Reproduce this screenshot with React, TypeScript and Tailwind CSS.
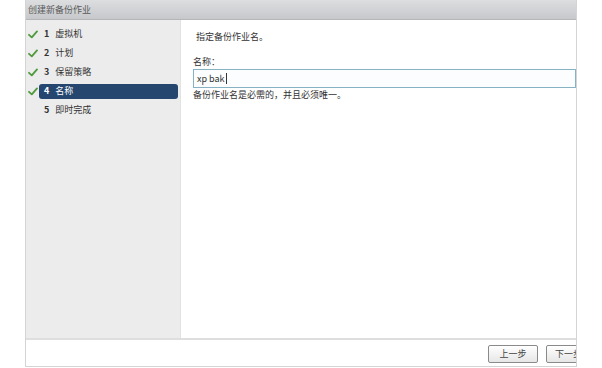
import { memo } from 'react';

// Wizard steps shown in the left column
const STEPS = [
  { no: 1, label: '虚拟机', done: true },
  { no: 2, label: '计划', done: true },
  { no: 3, label: '保留策略', done: true },
  { no: 4, label: '名称', done: true, active: true },
  { no: 5, label: '即时完成', done: false },
] as const;

const FONT = { fontFamily: '"Noto Sans CJK SC", "Liberation Sans", sans-serif' };

const Check = () => (
  <svg width="10" height="9" viewBox="0 0 10 9" className="shrink-0">
    <path d="M1 4.8 L3.8 7.4 L9 1.4" fill="none" stroke="#4f9a3c" strokeWidth="1.8" strokeLinecap="round" strokeLinejoin="round" />
  </svg>
);

const App = () => {
  return (
    <div className="w-[602px] h-[368px] bg-white flex overflow-hidden text-[#333]" style={FONT}>
      <div className="w-[25px] shrink-0" />

      {/* Dialog */}
      <div className="w-[552px] h-[367px] flex flex-col border-x border-b border-[#d4d4d4]">
        {/* Title bar */}
        <div className="h-[20px] shrink-0 flex items-center px-[2px] bg-gradient-to-b from-[#dcdee0] to-[#c6c8cb] border-b border-[#b4b6b8] text-[9px] text-[#5a5a5a]">
          创建新备份作业
        </div>

        {/* Body */}
        <div className="flex-1 flex min-h-0">
          {/* Steps */}
          <div className="w-[155px] shrink-0 bg-[#ececec] flex flex-col pt-[6px] gap-[3px] border-r border-[#e2e2e2]">
            {STEPS.map((s) => (
              <div key={s.no} className="flex items-center h-[16px]">
                <div className="w-[12px] flex justify-end">{s.done && <Check />}</div>
                <div
                  className={`ml-[1px] w-[139px] h-[15px] flex items-center pl-[5px] text-[9px] rounded-[3px] ${
                    s.active ? 'bg-[#24466f] text-white' : 'text-[#333]'
                  }`}
                >
                  <span className="mr-[6px] font-semibold">{s.no}</span>
                  {s.label}
                </div>
              </div>
            ))}
          </div>

          {/* Content */}
          <div className="flex-1 bg-white pl-[12px] pt-[11px] text-[9px] leading-[12px] text-[#333]">
            <div className="pl-[3px]">指定备份作业名。</div>
            <div className="mt-[13px]">名称：</div>
            <div className="mt-[1px] h-[19px] border border-[#86b2c4] bg-[#fbfdfe] flex items-center px-[3px]">
              xp bak<span className="w-px h-[11px] bg-[#333] ml-px" />
            </div>
            <div className="mt-[1px]">备份作业名是必需的，并且必须唯一。</div>
          </div>
        </div>

        {/* Footer */}
        <div className="h-[28px] shrink-0 border-t-2 border-[#dedede] flex items-center justify-end gap-[8px] pt-[2px] overflow-hidden">
          <button className="w-[50px] h-[18px] border border-[#8a8a8a] rounded-[2px] bg-gradient-to-b from-white to-[#e6e6e6] text-[9px] text-[#444]">
            上一步
          </button>
          <button className="w-[50px] h-[18px] -mr-[20px] border border-[#8a8a8a] rounded-[2px] bg-gradient-to-b from-white to-[#e6e6e6] text-[9px] text-[#444] text-left pl-[8px]">
            下一步
          </button>
        </div>
      </div>

      <div className="flex-1" />
    </div>
  );
};

export default memo(App);
